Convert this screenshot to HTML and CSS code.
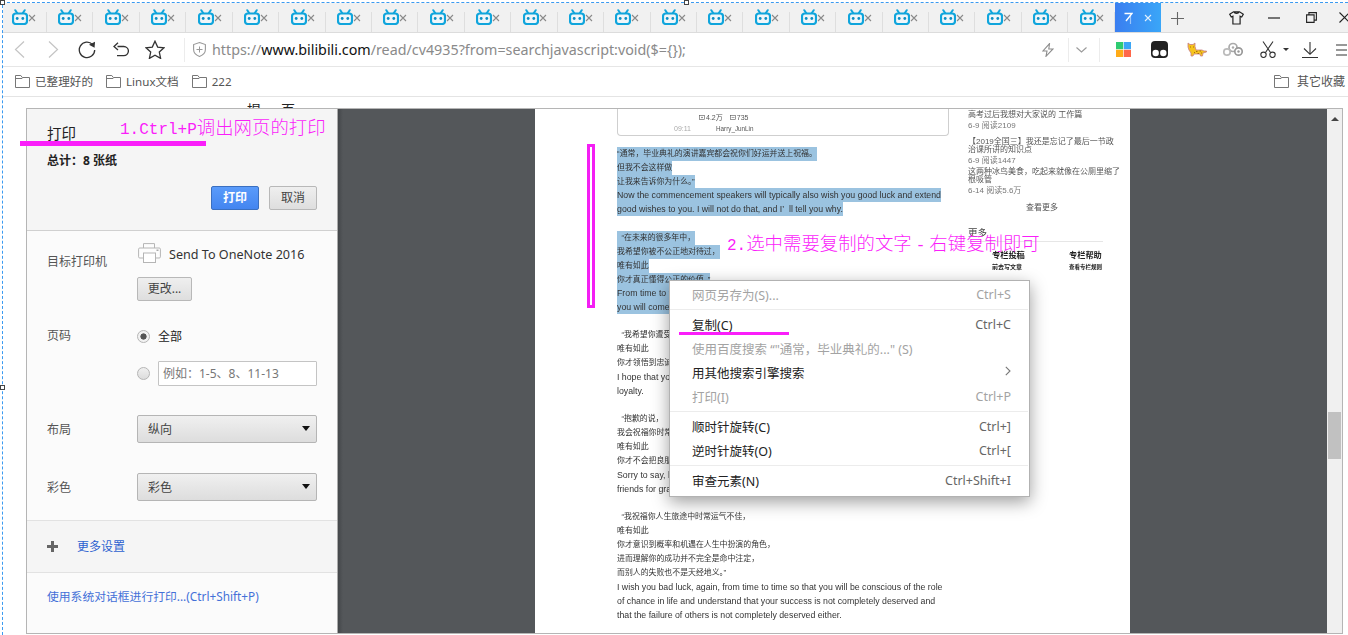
FILE: index.html
```html
<!DOCTYPE html>
<html lang="zh-CN">
<head>
<meta charset="utf-8">
<title>打印</title>
<link rel="stylesheet" href="styles.css">
</head>
<body>
<svg class="defs" width="0" height="0" aria-hidden="true">
  <symbol id="bili" viewBox="0 0 16 16">
    <path d="M5.500 4.500 3.300 1.200M10.500 4.500l2.200-3.300" fill="none" stroke="#10a5dc" stroke-width="2" stroke-linecap="round"/>
    <rect x="1" y="4.500" width="14" height="10.500" rx="2.800" fill="#f1f6f9" stroke="#10a5dc" stroke-width="2.200"/>
    <circle cx="5.200" cy="9.500" r="1.400" fill="#0c8fc4"/><circle cx="10.800" cy="9.500" r="1.400" fill="#0c8fc4"/>
  </symbol>
  <symbol id="cross" viewBox="0 0 8 8">
    <path d="M1 1l6 6M7 1 1 7" fill="none" stroke="#8a8a8a" stroke-width="1.100"/>
  </symbol>
  <symbol id="folder" viewBox="0 0 15 13">
    <path d="M.5 12.500V.5h5.300l1.500 2h7.200v10zM.5 3.500h6.800" fill="none" stroke="#777" stroke-width="1"/>
  </symbol>
</svg>
<div class="shot">
  <div class="tabs">
    <div class="tab"><svg class="bili"><use href="#bili"/></svg><svg class="cross"><use href="#cross"/></svg></div>
    <div class="tab"><svg class="bili"><use href="#bili"/></svg><svg class="cross"><use href="#cross"/></svg></div>
    <div class="tab"><svg class="bili"><use href="#bili"/></svg><svg class="cross"><use href="#cross"/></svg></div>
    <div class="tab"><svg class="bili"><use href="#bili"/></svg><svg class="cross"><use href="#cross"/></svg></div>
    <div class="tab"><svg class="bili"><use href="#bili"/></svg><svg class="cross"><use href="#cross"/></svg></div>
    <div class="tab"><svg class="bili"><use href="#bili"/></svg><svg class="cross"><use href="#cross"/></svg></div>
    <div class="tab"><svg class="bili"><use href="#bili"/></svg><svg class="cross"><use href="#cross"/></svg></div>
    <div class="tab"><svg class="bili"><use href="#bili"/></svg><svg class="cross"><use href="#cross"/></svg></div>
    <div class="tab"><svg class="bili"><use href="#bili"/></svg><svg class="cross"><use href="#cross"/></svg></div>
    <div class="tab"><svg class="bili"><use href="#bili"/></svg><svg class="cross"><use href="#cross"/></svg></div>
    <div class="tab"><svg class="bili"><use href="#bili"/></svg><svg class="cross"><use href="#cross"/></svg></div>
    <div class="tab"><svg class="bili"><use href="#bili"/></svg><svg class="cross"><use href="#cross"/></svg></div>
    <div class="tab"><svg class="bili"><use href="#bili"/></svg><svg class="cross"><use href="#cross"/></svg></div>
    <div class="tab"><svg class="bili"><use href="#bili"/></svg><svg class="cross"><use href="#cross"/></svg></div>
    <div class="tab"><svg class="bili"><use href="#bili"/></svg><svg class="cross"><use href="#cross"/></svg></div>
    <div class="tab"><svg class="bili"><use href="#bili"/></svg><svg class="cross"><use href="#cross"/></svg></div>
    <div class="tab"><svg class="bili"><use href="#bili"/></svg><svg class="cross"><use href="#cross"/></svg></div>
    <div class="tab"><svg class="bili"><use href="#bili"/></svg><svg class="cross"><use href="#cross"/></svg></div>
    <div class="tab"><svg class="bili"><use href="#bili"/></svg><svg class="cross"><use href="#cross"/></svg></div>
    <div class="tab"><svg class="bili"><use href="#bili"/></svg><svg class="cross"><use href="#cross"/></svg></div>
    <div class="tab"><svg class="bili"><use href="#bili"/></svg><svg class="cross"><use href="#cross"/></svg></div>
    <div class="tab"><svg class="bili"><use href="#bili"/></svg><svg class="cross"><use href="#cross"/></svg></div>
    <div class="tab"><svg class="bili"><use href="#bili"/></svg><svg class="cross"><use href="#cross"/></svg></div>
    <div class="tab"><svg class="bili"><use href="#bili"/></svg><svg class="cross"><use href="#cross"/></svg></div>
    <div class="tab-active">
      <svg class="act-glyph" viewBox="0 0 9 12"><path d="M.5 1.500h7.500L2 9" fill="none" stroke="#fff" stroke-width="1.400"/><path d="M6.500 4v8" stroke="#fff" stroke-opacity=".5" stroke-width="1.200"/></svg>
      <svg class="act-x" viewBox="0 0 8 8"><path d="M1 1l6 6M7 1 1 7" fill="none" stroke="#fff" stroke-opacity=".85" stroke-width="1.100"/></svg>
    </div>
    <svg class="newtab" viewBox="0 0 13 13"><path d="M6.500 0v13M0 6.500h13" stroke="#666" stroke-width="1.100"/></svg>
    <div class="winbtns">
      <svg class="shirt" viewBox="0 0 15 14"><path d="M4.500.8h6l3.800 2.400-1.600 2.800-1.600-.8v7.800H3.900V5.200l-1.600.8L.7 3.200zM5 1c.6 1.800 4.400 1.800 5 0" fill="none" stroke="#222" stroke-width="1.200"/></svg>
      <svg class="wmin" viewBox="0 0 12 2"><path d="M0 1h12" stroke="#222" stroke-width="1.200"/></svg>
      <svg class="wmax" viewBox="0 0 11 11"><path d="M.6 2.900h7.500v7.500H.6zM2.900 2.900V.6h7.500v7.500H8.100" fill="none" stroke="#222" stroke-width="1.100"/></svg>
      <svg class="wclose" viewBox="0 0 11 11"><path d="M.5.500l10 10M10.500.5l-10 10" stroke="#222" stroke-width="1.100"/></svg>
    </div>
  </div>

  <div class="addr">
    <svg class="nav-back" viewBox="0 0 11 17"><path d="M10 .5 1.500 8.500 10 16.500" fill="none" stroke="#c4c4c4" stroke-width="1.200"/></svg>
    <svg class="nav-fwd" viewBox="0 0 11 17"><path d="M1 .5l8.500 8L1 16.500" fill="none" stroke="#c4c4c4" stroke-width="1.200"/></svg>
    <svg class="nav-reload" viewBox="0 0 18 18"><path d="M14.600 3.600A7.700 7.700 0 1 0 16.700 9" fill="none" stroke="#333" stroke-width="1.300"/><path d="M11 3.800 17 .8l-.4 6z" fill="#333"/></svg>
    <svg class="nav-undo" viewBox="0 0 16 15"><path d="M4.500 4.500h6.300a4.400 4.400 0 0 1 0 9.200H4M5 .8 1 4.500 5 8" fill="none" stroke="#333" stroke-width="1.300"/></svg>
    <svg class="nav-star" viewBox="0 0 20 19"><path d="M10 1.200l2.700 5.900 6.300.7-4.700 4.300 1.300 6.300L10 15.300l-5.600 3.100 1.300-6.300L1 7.800l6.300-.7z" fill="none" stroke="#333" stroke-width="1.300"/></svg>
    <span class="vsep sep-a"></span>
    <svg class="shield" viewBox="0 0 13 15"><path d="M6.500.6 12.400 2.600v5c0 3.300-2.700 5.700-5.900 6.800C3.300 13.300.6 10.900.6 7.600v-5z" fill="none" stroke="#999" stroke-width="1.100"/><path d="M6.500 4.500v6M3.500 7.500h6" stroke="#999" stroke-width="1"/></svg>
    <div class="url">https://<b>www.bilibili.com</b>/read/cv4935?from=searchjavascript:void($={});</div>
    <svg class="bolt" viewBox="0 0 12 14"><path d="M7.500.7 1 8h4l-1 5.300L11 6H6.800z" fill="none" stroke="#8c8c8c" stroke-width="1.100"/></svg>
    <span class="vsep sep-b"></span>
    <svg class="chev" viewBox="0 0 11 6"><path d="M.5.500 5.500 5l5-4.500" fill="none" stroke="#9a9a9a" stroke-width="1.100"/></svg>
    <span class="vsep sep-c"></span>
    <svg class="ext-grid" viewBox="0 0 15 15"><rect width="7.200" height="7.200" fill="#2ecb71"/><rect x="7.800" width="7.200" height="7.200" fill="#3aa6f6"/><rect y="7.800" width="7.200" height="7.200" fill="#ffab17"/><rect x="7.800" y="7.800" width="7.200" height="7.200" fill="#ff6649"/></svg>
    <svg class="ext-ghost" viewBox="0 0 17 17"><rect width="17" height="17" rx="4" fill="#222"/><circle cx="4.700" cy="12" r="3.200" fill="#fff"/><circle cx="12.300" cy="12" r="3.200" fill="#fff"/></svg>
    <svg class="ext-cat" viewBox="0 0 20 16"><path d="M1 1l2 1.500h3L8 1v3.500l1 3.500h6l2 1h2.500v1l-3.500 1-.5 3h-2l-.5-2H7l-1 2H4v-3L2 8 1 5z" fill="#f6c41d" stroke="#c77d86" stroke-width=".8"/><path d="M3 5h1M6 5h1M9 9.500h1.500M12.500 9h1.500M7 10.500h1M10.500 11.500h1.500M14 11h1" stroke="#a66f0c" stroke-width="1"/></svg>
    <svg class="ext-cloud" viewBox="0 0 20 15"><circle cx="10" cy="5.500" r="4" fill="none" stroke="#aaa" stroke-width="1.700"/><circle cx="15.500" cy="9.500" r="3.700" fill="#fff" stroke="#999" stroke-width="1.700"/><circle cx="4" cy="10" r="3.200" fill="none" stroke="#bbb" stroke-width="1.700"/><circle cx="15.500" cy="9.500" r="1.200" fill="#999"/><circle cx="10" cy="5.500" r="1.200" fill="#aaa"/></svg>
    <svg class="scissors" viewBox="0 0 16 17"><path d="M3 .5 10.500 11.500M13 .5 5.500 11.500" fill="none" stroke="#333" stroke-width="1.100"/><circle cx="3.500" cy="13.800" r="2.700" fill="none" stroke="#333" stroke-width="1.100"/><circle cx="12.500" cy="13.800" r="2.700" fill="none" stroke="#333" stroke-width="1.100"/></svg>
    <svg class="caret" viewBox="0 0 6 3"><path d="M0 0h6L3 3z" fill="#333"/></svg>
    <svg class="download" viewBox="0 0 16 16"><path d="M8 0v12M2 6.500 8 12.300l6-5.800M0 15.500h16" fill="none" stroke="#333" stroke-width="1.100"/></svg>
    <svg class="hamb" viewBox="0 0 11 12"><path d="M0 1h11M0 6h11M0 11h11" stroke="#333" stroke-width="1.100"/></svg>
  </div>

  <div class="marks">
    <div class="mark m1"><svg class="fold"><use href="#folder"/></svg>已整理好的</div>
    <div class="mark m2"><svg class="fold"><use href="#folder"/></svg>Linux文档</div>
    <div class="mark m3"><svg class="fold"><use href="#folder"/></svg>222</div>
    <div class="mark m4"><svg class="fold"><use href="#folder"/></svg>其它收藏</div>
  </div>

  <div class="stage">
    <div class="behind">提<span class="behind-gap">页</span></div>
    <div class="dialog">
      <div class="panel">
        <div class="hd">
          <div class="hd-title">打印</div>
          <div class="hd-total">总计：8 张纸</div>
          <div class="hd-actions">
            <button class="btn primary">打印</button>
            <button class="btn plain">取消</button>
          </div>
        </div>
        <div class="settings">
          <div class="row row-printer">
            <div class="lab lab-printer">目标打印机</div>
            <div class="val">
              <div class="printer">
                <svg class="pr-icon" viewBox="0 0 23 20"><path d="M5.500 5V.6h11V5M5 15H1.800Q.6 15 .6 13.800V6.200Q.6 5 1.800 5h19.400q1.200 0 1.200 1.200v7.600q0 1.200-1.200 1.200H18" fill="#fdfdfd" stroke="#b5b5b5"/><rect x="5.500" y="10" width="12" height="9.500" fill="#fff" stroke="#b5b5b5"/><rect x="18.500" y="6.500" width="2" height="1.500" fill="#aaa"/></svg>
                <span class="pr-name">Send To OneNote 2016</span>
              </div>
              <button class="btn plain wide">更改...</button>
            </div>
          </div>
          <div class="row row-pages">
            <div class="lab lab-pages">页码</div>
            <div class="val">
              <div class="radio-row"><span class="radio on"></span><span class="radio-text">全部</span></div>
              <div class="radio-row second"><span class="radio"></span><div class="input">例如：1-5、8、11-13</div></div>
            </div>
          </div>
          <div class="row row-sel first">
            <div class="lab lab-sel">布局</div>
            <div class="select">纵向<i class="tri"></i></div>
          </div>
          <div class="row row-sel">
            <div class="lab lab-sel">彩色</div>
            <div class="select">彩色<i class="tri"></i></div>
          </div>
        </div>
        <div class="more">
          <svg class="plus" viewBox="0 0 11 11"><path d="M5.500 0v11M0 5.500h11" stroke="#666" stroke-width="3"/></svg>
          <a class="link more-link">更多设置</a>
        </div>
        <div class="sys"><a class="link sys-link">使用系统对话框进行打印...(Ctrl+Shift+P)</a></div>
      </div>

      <div class="preview">
        <div class="page">
          <div class="main">
            <div class="card">
              <div class="stats"><svg class="st-ic" viewBox="0 0 6 5"><rect x=".5" y=".5" width="5" height="4" fill="none" stroke="#555" stroke-width=".6"/><circle cx="3" cy="2.500" r=".7" fill="#555"/></svg>4.2万<svg class="st-ic st-b" viewBox="0 0 6 5"><rect x=".5" y=".5" width="5" height="4" fill="none" stroke="#555" stroke-width=".6"/><path d="M1.500 2.500h3" stroke="#555" stroke-width=".5"/></svg>735</div>
              <div class="meta"><span class="time">09:11</span><span>Harry_JunLin</span></div>
            </div>
            <div class="article">
              <p class="ln"><span class="sel zh">“通常，毕业典礼的演讲嘉宾都会祝你们好运并送上祝福。</span></p>
              <p class="ln"><span class="sel zh">但我不会这样做</span></p>
              <p class="ln"><span class="sel zh">让我来告诉你为什么。”</span></p>
              <p class="ln"><span class="sel">Now the commencement speakers will typically also wish you good luck and extend</span></p>
              <p class="ln"><span class="sel">good wishes to you. I will not do that, and I’&nbsp;&nbsp;ll tell you why.</span></p>
              <p class="ln">&nbsp;</p>
              <p class="ln"><span class="sel zh">&nbsp;&nbsp;“在未来的很多年中，</span></p>
              <p class="ln"><span class="sel zh">我希望你被不公正地对待过，</span></p>
              <p class="ln"><span class="sel zh">唯有如此</span></p>
              <p class="ln"><span class="sel zh">你才真正懂得公正的价值。”</span></p>
              <p class="ln"><span class="sel">From time to time in the years to come, I hope you will be treated unfairly, so that</span></p>
              <p class="ln"><span class="sel">you will come to know the value of justice.</span></p>
              <p class="ln">&nbsp;</p>
              <p class="ln zh">&nbsp;&nbsp;“我希望你遭受背叛，</p>
              <p class="ln zh">唯有如此</p>
              <p class="ln zh">你才领悟到忠诚之重要。”</p>
              <p class="ln">I hope that you will suffer betrayal because that will teach you the importance of</p>
              <p class="ln">loyalty.</p>
              <p class="ln">&nbsp;</p>
              <p class="ln zh">&nbsp;&nbsp;“抱歉的说，</p>
              <p class="ln zh">我会祝福你时常感到孤独，</p>
              <p class="ln zh">唯有如此</p>
              <p class="ln zh">你才不会把良朋益友视为理所当然。”</p>
              <p class="ln">Sorry to say, but I hope you will be lonely from time to time so that you don’t take</p>
              <p class="ln">friends for granted.</p>
              <p class="ln">&nbsp;</p>
              <p class="ln zh">&nbsp;&nbsp;“我祝福你人生旅途中时常运气不佳，</p>
              <p class="ln zh">唯有如此</p>
              <p class="ln zh">你才意识到概率和机遇在人生中扮演的角色，</p>
              <p class="ln zh">进而理解你的成功并不完全是命中注定，</p>
              <p class="ln zh">而别人的失败也不是天经地义。”</p>
              <p class="ln">I wish you bad luck, again, from time to time so that you will be conscious of the role</p>
              <p class="ln">of chance in life and understand that your success is not completely deserved and</p>
              <p class="ln">that the failure of others is not completely deserved either.</p>
            </div>
          </div>
          <div class="side">
            <div class="t first">高考过后我想对大家说的 工作篇</div>
            <div class="m">6-9 阅读2109</div>
            <div class="t gap-a">【2019全国三】我还是忘记了最后一节政</div>
            <div class="t">治课所讲的知识点</div>
            <div class="m">6-9 阅读1447</div>
            <div class="t gap-b">这两种冰鸟美食，吃起来就像在公厕里缩了</div>
            <div class="t">根吸管</div>
            <div class="m">6-14 阅读5.6万</div>
            <div class="see">查看更多</div>
            <div class="more-h">更多</div>
            <div class="two">
              <div class="two-a"><div class="two-t">专栏投稿</div><div class="two-s">前去写文章</div></div>
              <div class="two-b"><div class="two-t">专栏帮助</div><div class="two-s narrow">查看专栏规则</div></div>
            </div>
          </div>
        </div>
      </div>

      <div class="scrollbar">
        <svg class="sc-up" viewBox="0 0 8 4"><path d="M4 0l4 4H0z" fill="#444"/></svg>
        <div class="sc-thumb"></div>
      </div>
    </div>
  </div>

  <div class="menu">
    <div class="mi off"><span>网页另存为(S)...</span><span>Ctrl+S</span></div>
    <div class="msep"></div>
    <div class="mi"><span>复制(C)</span><span class="sc">Ctrl+C</span></div>
    <div class="mi off"><span>使用百度搜索 “"通常，毕业典礼的..." (S)</span></div>
    <div class="mi"><span>用其他搜索引擎搜索</span><svg class="mi-arrow" viewBox="0 0 6 10"><path d="M.8.800 5 5 .8 9.200" fill="none" stroke="#777" stroke-width="1.100"/></svg></div>
    <div class="mi off"><span>打印(I)</span><span>Ctrl+P</span></div>
    <div class="msep"></div>
    <div class="mi"><span>顺时针旋转(C)</span><span class="sc">Ctrl+]</span></div>
    <div class="mi"><span>逆时针旋转(O)</span><span class="sc">Ctrl+[</span></div>
    <div class="msep"></div>
    <div class="mi"><span>审查元素(N)</span><span class="sc">Ctrl+Shift+I</span></div>
  </div>

  <div class="note note-1"><span class="nl">1.Ctrl+P</span>调出网页的打印</div>
  <div class="note note-2"><span class="nl">2.</span>选中需要复制的文字<span class="nl dash">-</span>右键复制即可</div>
  <div class="bar bar-title"></div>
  <div class="bar bar-copy"></div>
  <div class="mark-box"></div>

  <div class="sel-top"></div>
  <div class="sel-left"></div>
  <div class="handle h-tl"></div>
  <div class="handle h-tm"></div>
  <div class="handle h-ml"></div>
</div>
</body>
</html>
```
FILE: styles.css
```css
* { box-sizing: border-box; }
html, body { margin: 0; padding: 0; background: #fff; }
.defs { position: absolute; }
.shot {
  position: relative;
  width: 1348px;
  height: 635px;
  overflow: hidden;
  background: #fff;
  font-family: "Noto Sans", "Noto Sans CJK SC", sans-serif;
  color: #333;
}
svg { display: block; flex: none; }
p { margin: 0; }

/* tab strip */
.tabs {
  display: flex;
  align-items: stretch;
  height: 30px;
  margin-top: 3px;
  padding-left: .6px;
  background: #f1f1f1;
  border-bottom: 1px solid #dcdcdc;
}
.tab {
  flex: none;
  display: flex;
  width: 46.43px;
  padding: 6px 0 0 11.4px;
  background: linear-gradient(#dedede, #dedede) right bottom / 1px 20px no-repeat;
}
.bili { width: 16px; height: 16px; }
.cross { width: 8px; height: 8px; margin-top: 5px; }
.tab-active {
  flex: none;
  display: flex;
  align-items: center;
  width: 46px;
  margin-left: .3px;
  padding-left: 9px;
  background: linear-gradient(90deg, #3a7ef0, #3aa6f8);
}
.act-glyph { width: 9px; height: 12px; }
.act-x { width: 8px; height: 8px; margin-left: 11px; }
.newtab { width: 13px; height: 13px; margin: 9px 0 0 10px; }
.winbtns { display: flex; align-items: center; flex: 1; }
.shirt { width: 15px; height: 14px; margin-left: 45px; }
.wmin { width: 12px; height: 2px; margin-left: 24px; }
.wmax { width: 11px; height: 11px; margin-left: 26px; }
.wclose { width: 11px; height: 11px; margin-left: 22px; }

/* address bar */
.addr {
  display: flex;
  align-items: center;
  height: 34px;
  background: #fff;
  border-bottom: 1px solid #e6e6e6;
}
.nav-back { width: 11px; height: 17px; margin-left: 14px; }
.nav-fwd { width: 11px; height: 17px; margin-left: 23px; }
.nav-reload { width: 18px; height: 18px; margin-left: 19px; }
.nav-undo { width: 16px; height: 15px; margin-left: 17px; }
.nav-star { width: 20px; height: 19px; margin-left: 16px; }
.vsep { flex: none; width: 1px; height: 24px; background: #ececec; }
.sep-a { margin-left: 19px; }
.shield { width: 13px; height: 15px; margin-left: 8px; }
.url {
  flex: none;
  width: 830px;
  margin-left: 6px;
  font-size: 14.3px;
  line-height: 20px;
  white-space: nowrap;
  color: #8a8a8a;
}
.url b { font-weight: 400; color: #111; }
.bolt { width: 12px; height: 14px; }
.sep-b { margin-left: 14px; }
.chev { width: 11px; height: 6px; margin-left: 7px; }
.sep-c { margin-left: 12px; }
.ext-grid { width: 15px; height: 15px; margin-left: 16px; }
.ext-ghost { width: 17px; height: 17px; margin-left: 20px; }
.ext-cat { width: 20px; height: 16px; margin-left: 19px; }
.ext-cloud { width: 20px; height: 15px; margin-left: 16px; }
.scissors { width: 16px; height: 17px; margin-left: 17px; }
.caret { width: 6px; height: 3px; margin-left: 7px; }
.download { width: 16px; height: 16px; margin-left: 13px; }
.hamb { width: 11px; height: 12px; margin-left: 18px; }

/* bookmarks */
.marks {
  display: flex;
  align-items: center;
  height: 30px;
  padding: 0 3px 1px 15px;
  font-size: 11.6px;
  color: #555;
  background: #fff;
  border-bottom: 1px solid #e4e4e4;
}
.mark { display: flex; align-items: center; white-space: nowrap; }
.fold { width: 15px; height: 13px; margin-right: 5px; }
.m2 { margin-left: 13px; }
.m3 { margin-left: 13px; }
.m4 { margin-left: auto; font-size: 12px; }
.m4 .fold { margin-right: 8px; }

/* print dialog */
.stage { height: 538px; padding: 0 5px 0 26px; }
.behind {
  height: 11px;
  margin-left: 221px;
  overflow: hidden;
  padding-top: 3px;
  font-size: 14px;
  line-height: 20px;
  color: #222;
}
.behind-gap { margin-left: 20px; }
.dialog {
  display: flex;
  height: 526px;
  background: #fff;
  border: 1px solid #b5b5b5;
}
.panel {
  flex: none;
  display: flex;
  flex-direction: column;
  width: 311px;
  background: #fbfbfb;
  border-right: 1px solid #aaa;
}
.hd {
  height: 122px;
  padding: 14px 20px 0;
  background: #f5f5f5;
  border-bottom: 1px solid #d0d0d0;
}
.hd-title { font-size: 14.5px; line-height: 20px; color: #222; }
.hd-total { margin-top: 9px; font-size: 12px; line-height: 18px; font-weight: 700; color: #222; }
.hd-actions { display: flex; justify-content: flex-end; gap: 10px; margin-top: 16px; }
.btn {
  display: block;
  width: 48px;
  height: 24px;
  padding: 0;
  font-family: inherit;
  font-size: 12px;
  line-height: 20px;
  border-radius: 2px;
}
.primary {
  font-weight: 700;
  color: #fff;
  background: linear-gradient(#5a9bfa, #4385f0);
  border: 1px solid #3a6fc0;
}
.plain {
  color: #444;
  background: linear-gradient(#efefef, #dedede);
  border: 1px solid #b8b8b8;
}
.wide { width: 55px; margin-top: 14px; }
.settings { padding: 0 20px; }
.row { display: flex; }
.lab { flex: none; width: 90px; font-size: 12px; line-height: 16px; color: #555; }
.row-printer { margin-top: 12px; }
.lab-printer { padding-top: 11px; }
.printer { display: flex; align-items: center; height: 20px; font-size: 12.6px; color: #333; white-space: nowrap; }
.pr-icon { width: 23px; height: 20px; margin: 0 8px 0 1px; }
.pr-name { position: relative; top: 1px; }
.row-pages { margin-top: 25px; }
.lab-pages { padding-top: 2px; }
.radio-row { display: flex; align-items: center; height: 20px; }
.radio {
  flex: none;
  width: 13px;
  height: 13px;
  border-radius: 50%;
  border: 1px solid #b5b5b5;
  background: linear-gradient(#f0f0f0, #dcdcdc);
}
.radio.on { background: radial-gradient(circle, #555 0 2.800px, #f2f2f2 3.400px); }
.radio-text { margin-left: 8px; font-size: 12px; color: #222; }
.second { height: 25px; margin-top: 15px; }
.input {
  width: 159px;
  height: 25px;
  margin-left: 8px;
  padding-left: 4px;
  font-size: 12px;
  line-height: 23px;
  color: #777;
  background: #fff;
  border: 1px solid #c4c4c4;
  border-radius: 1px;
}
.row-sel { align-items: center; margin-top: 30px; }
.row-sel.first { margin-top: 29px; }
.lab-sel { padding-top: 2px; }
.select {
  position: relative;
  width: 180px;
  height: 28px;
  padding-left: 10px;
  font-size: 12px;
  line-height: 28px;
  color: #444;
  background: linear-gradient(#f0f0f0, #dddddd);
  border: 1px solid #b5b5b5;
  border-radius: 2px;
}
.tri {
  position: absolute;
  right: 6px;
  top: 10px;
  width: 0;
  height: 0;
  border: 4.500px solid transparent;
  border-top: 5px solid #111;
  border-bottom: 0;
}
.more {
  display: flex;
  align-items: center;
  height: 53px;
  margin-top: 19px;
  padding-left: 20px;
  background: #f5f5f5;
  border-top: 1px solid #e2e2e2;
  border-bottom: 1px solid #e2e2e2;
}
.plus { width: 11px; height: 11px; }
.link { color: #2d62d0; font-size: 12px; }
.more-link { margin: -2px 0 0 19px; }
.sys { padding: 13px 20px 0; line-height: 18px; }
.sys-link { color: #4470d8; font-size: 11.8px; }

/* preview */
.preview {
  flex: 1;
  padding-left: 197px;
  overflow: hidden;
  background: linear-gradient(90deg, #44474a, #54575a 5px);
}
.page {
  display: flex;
  width: 595px;
  height: 524px;
  padding-left: 82px;
  overflow: hidden;
  background: #fff;
  color: #333;
  font-family: "Liberation Sans", "Noto Sans CJK SC", sans-serif;
  font-size: 8.78px;
  filter: blur(.3px);
}
.main { flex: none; width: 351px; }
.card {
  width: 332px;
  height: 27px;
  padding-left: 80px;
  border: 1px solid #cfcfcf;
  border-top: 0;
  border-radius: 0 0 4px 4px;
  font-size: 7px;
  color: #555;
}
.stats { display: flex; align-items: center; height: 16px; padding-left: 1px; }
.st-ic { width: 6px; height: 5px; margin-right: 1px; }
.st-b { margin-left: 7px; }
.meta { display: flex; height: 8px; line-height: 8px; margin-left: -24px; font-size: 6.3px; }
.time { width: 42px; color: #aaa; font-size: 7px; }
.article { margin-top: 10px; white-space: nowrap; }
.ln { height: 14px; line-height: 14px; }
.zh { font-size: 7.9px; }
.sel { display: inline-block; background: #9bc3e0; height: 14px; line-height: 14px; }
.side { flex: none; width: 148px; padding-top: 2px; color: #555; font-size: 8px; }
.t { line-height: 8px; white-space: nowrap; }
.m { margin-top: 2px; line-height: 10px; color: #777; }
.gap-a { margin-top: 7px; }
.gap-b { margin-top: 2px; }
.see { margin-top: 7px; line-height: 10px; text-align: center; }
.more-h {
  width: 135px;
  margin-top: 13px;
  padding-bottom: 1px;
  font-size: 9.5px;
  line-height: 14px;
  color: #444;
  border-bottom: 1px solid #e6e6e6;
}
.two { display: flex; margin-top: 9px; padding-left: 24px; color: #222; }
.two-a { width: 77px; }
.two-t { font-size: 8.2px; line-height: 10px; font-weight: 700; white-space: nowrap; }
.two-s { margin-top: 1px; font-size: 6px; line-height: 10px; font-weight: 700; white-space: nowrap; }
.narrow { font-size: 5.5px; }

/* scrollbar */
.scrollbar {
  flex: none;
  display: flex;
  flex-direction: column;
  align-items: center;
  width: 15px;
  background: #f0f0f0;
}
.sc-up { width: 8px; height: 4px; margin-top: 8px; }
.sc-thumb { width: 13px; height: 47px; margin-top: 291px; background: #c1c1c1; }

/* overlays */
.menu {
  position: absolute;
  left: 669px;
  top: 280px;
  width: 361px;
  height: 217px;
  padding: 1px 18px 2px 0;
  background: #fff;
  border: 1px solid #b2b2b2;
  box-shadow: 0 5px 16px rgba(0, 0, 0, .38);
  font-size: 12.5px;
  color: #222;
}
.mi {
  display: flex;
  justify-content: space-between;
  align-items: center;
  height: 24px;
  padding-left: 22px;
  white-space: nowrap;
}
.off { color: #a3a3a3; }
.sc { color: #666; }
.mi-arrow { width: 6px; height: 10px; margin-top: -2px; }
.msep { height: 6px; margin-right: -17px; background: linear-gradient(#ececec, #ececec) center / 100% 1px no-repeat; }

.note {
  position: absolute;
  color: #fa1efa;
  font-family: "Noto Sans CJK SC", sans-serif;
  font-weight: 300;
  font-size: 18.4px;
  line-height: 22px;
  white-space: nowrap;
}
.nl { font-family: "Liberation Mono", monospace; font-size: 16px; }
.dash { padding: 0 4px; }
.note-1 { left: 120px; top: 115px; }
.note-2 { left: 727px; top: 231px; }
.bar { position: absolute; background: #fa1efa; }
.bar-title { left: 20px; top: 141px; width: 186px; height: 5px; }
.bar-copy { left: 679px; top: 332px; width: 110px; height: 3px; }
.mark-box {
  position: absolute;
  left: 587px;
  top: 144px;
  width: 8px;
  height: 164px;
  background: #fff;
  border: 3px solid #f41ef4;
}
.sel-top {
  position: absolute;
  left: 2px;
  top: 2px;
  width: 1346px;
  border-top: 1px dashed #3b9af0;
}
.sel-left {
  position: absolute;
  left: 0;
  top: 0;
  width: 3px;
  height: 635px;
  background: #fff;
  border-right: 1px dashed #3b9af0;
}
.handle {
  position: absolute;
  width: 5px;
  height: 5px;
  background: #fff;
  border: 1px solid #444;
}
.h-tl { left: 0; top: 0; }
.h-tm { left: 684px; top: 0; }
.h-ml { left: 0; top: 385px; }
```
